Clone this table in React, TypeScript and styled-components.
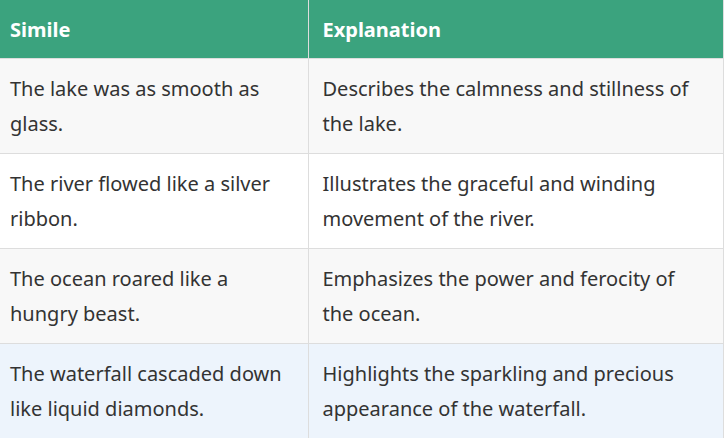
import React from "react";
import styled, { createGlobalStyle } from "styled-components";

const Global = createGlobalStyle`
  html, body { margin: 0; padding: 0; background: #ffffff; }
  body { font-family: "Noto Sans", "Open Sans", sans-serif; }
`;

const Table = styled.table`
  width: 724px;
  border-collapse: collapse;
  table-layout: fixed;
  font-size: 20px;
  color: #333333;
`;

const HeadCell = styled.th<{ $first?: boolean }>`
  background: #3ba37e;
  color: #ffffff;
  font-weight: 700;
  text-align: left;
  height: 58px;
  padding: 0 14px 0 ${(p) => (p.$first ? "10px" : "14px")};
  border-right: 1px solid #dddddd;
  border-bottom: 1px solid #dddddd;
  line-height: 1.75;
`;

const Row = styled.tr<{ $bg: string }>`
  background: ${(p) => p.$bg};
`;

const Cell = styled.td<{ $first?: boolean }>`
  padding: 12px 14px 12px ${(p) => (p.$first ? "10px" : "14px")};
  line-height: 35px;
  vertical-align: middle;
  border-right: 1px solid #dddddd;
  border-bottom: 1px solid #dddddd;
`;

const rows = [
  ["The lake was as smooth as glass.", "Describes the calmness and stillness of the lake.", "#f8f8f8"],
  ["The river flowed like a silver ribbon.", "Illustrates the graceful and winding movement of the river.", "#ffffff"],
  ["The ocean roared like a hungry beast.", "Emphasizes the power and ferocity of the ocean.", "#f8f8f8"],
  ["The waterfall cascaded down like liquid diamonds.", "Highlights the sparkling and precious appearance of the waterfall.", "#edf4fc"],
];

export default function App() {
  return (
    <>
      <Global />
      <Table>
        <colgroup>
          <col style={{ width: 308 }} />
          <col />
        </colgroup>
        <thead>
          <tr>
            <HeadCell $first>Simile</HeadCell>
            <HeadCell>Explanation</HeadCell>
          </tr>
        </thead>
        <tbody>
          {rows.map(([a, b, bg]) => (
            <Row key={a} $bg={bg}>
              <Cell $first>{a}</Cell>
              <Cell>{b}</Cell>
            </Row>
          ))}
        </tbody>
      </Table>
    </>
  );
}
